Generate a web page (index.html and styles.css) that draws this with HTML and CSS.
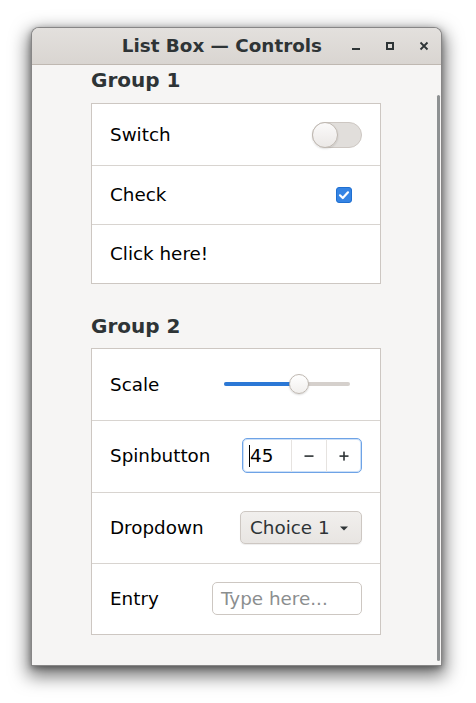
FILE: index.html
```html
<!DOCTYPE html>
<html>
<head>
<meta charset="utf-8">
<link rel="stylesheet" href="styles.css">
</head>
<body>
<div class="window">
  <div class="titlebar">
    <div class="title">List Box — Controls</div>
    <div class="wm-buttons">
      <span class="wm-btn"><svg width="16" height="16" viewBox="0 0 16 16"><rect x="4" y="10" width="8" height="2" fill="#2e3436"/></svg></span>
      <span class="wm-btn"><svg width="16" height="16" viewBox="0 0 16 16"><rect x="5" y="5" width="6" height="6" fill="none" stroke="#2e3436" stroke-width="2"/></svg></span>
      <span class="wm-btn"><svg width="16" height="16" viewBox="0 0 16 16"><path d="M4.5 4.5 L11.5 11.5 M11.5 4.5 L4.5 11.5" stroke="#2e3436" stroke-width="1.8" fill="none"/></svg></span>
    </div>
  </div>
  <div class="content">
    <div class="group-label first">Group 1</div>
    <div class="listbox">
      <div class="row h-switch">
        <span class="label">Switch</span>
        <span class="switch"><span class="knob"></span></span>
      </div>
      <div class="row h-small">
        <span class="label">Check</span>
        <span class="check"><svg width="16" height="16" viewBox="0 0 16 16"><rect x="0.5" y="0.5" width="15" height="15" rx="2.5" fill="#3584e4" stroke="#1f6fd0"/><path d="M4 8.3 L6.8 11 L12 5.3" stroke="#fff" stroke-width="2.2" fill="none" stroke-linecap="round" stroke-linejoin="round"/></svg></span>
      </div>
      <div class="row h-small">
        <span class="label">Click here!</span>
      </div>
    </div>
    <div class="group-label second">Group 2</div>
    <div class="listbox">
      <div class="row h-top">
        <span class="label">Scale</span>
        <span class="scale">
          <span class="trough"><span class="fill" style="width:75px"></span></span>
          <span class="slider" style="left:65px"></span>
        </span>
      </div>
      <div class="row h-mid">
        <span class="label">Spinbutton</span>
        <span class="spin">
          <span class="spin-entry"><span class="caret"></span>45</span>
          <span class="spin-btn"><svg width="16" height="16" viewBox="0 0 16 16"><rect x="3.5" y="7.3" width="9" height="1.6" fill="#2e3436"/></svg></span>
          <span class="spin-btn"><svg width="16" height="16" viewBox="0 0 16 16"><rect x="3.5" y="7.3" width="9" height="1.6" fill="#2e3436"/><rect x="7.2" y="3.6" width="1.6" height="9" fill="#2e3436"/></svg></span>
        </span>
      </div>
      <div class="row h-low">
        <span class="label">Dropdown</span>
        <span class="combo">Choice 1<svg width="16" height="16" viewBox="0 0 16 16"><path d="M4 6.5 H12 L8 10.5 Z" fill="#2e3436"/></svg></span>
      </div>
      <div class="row h-low">
        <span class="label">Entry</span>
        <span class="entry">Type here...</span>
      </div>
    </div>
    <div class="scrollbar"></div>
  </div>
</div>
</body>
</html>
```
FILE: styles.css
```css
* { box-sizing: border-box; }
html, body {
  margin: 0;
  background: #ffffff;
  font-family: "DejaVu Sans", sans-serif;
}
body {
  padding: 27px 0 40px 31px;
}
.window {
  position: relative;
  width: 411px;
  height: 639px;
  background: #f6f5f4;
  border: 1px solid rgba(0, 0, 0, 0.45);
  border-radius: 8px 8px 0 0;
  box-shadow: 0 7px 18px 3px rgba(0, 0, 0, 0.55), 0 2px 6px rgba(0, 0, 0, 0.35);
}
.titlebar {
  height: 37px;
  border-bottom: 1px solid #bfb8b1;
  background: linear-gradient(#e3e0dd, #d9d5d1);
  border-radius: 7px 7px 0 0;
  display: flex;
  align-items: center;
}
.title {
  margin-left: auto;
  margin-right: 17px;
  margin-top: -1px;
  font-weight: bold;
  font-size: 18.33px;
  line-height: 23px;
  color: #2e3436;
}
.wm-buttons { display: flex; }
.wm-btn {
  width: 34px;
  height: 34px;
  display: flex;
  align-items: center;
  justify-content: center;
}
.wm-btn svg { display: block; }
.content {
  padding-left: 59px;
}
.group-label {
  font-weight: bold;
  font-size: 20px;
  line-height: 23px;
  color: #2e3436;
  margin-bottom: 11px;
}
.group-label.first { margin-top: 4px; }
.group-label.second { margin-top: 31px; margin-bottom: 10px; }
.listbox {
  width: 290px;
  background: #ffffff;
  border: 1px solid #cdc7c2;
}
.row {
  display: flex;
  align-items: center;
  justify-content: space-between;
  padding: 0 18px 1px;
  font-size: 18.33px;
  color: #000;
}
.row + .row { border-top: 1px solid #d8d4d0; }
.row.h-switch { height: 61px; padding-bottom: 0; }
.row.h-small { height: 59px; }
.row.h-top { height: 71px; }
.row.h-mid { height: 72px; padding-bottom: 2px; }
.row.h-low { height: 71px; }
.switch {
  position: relative;
  width: 50px;
  height: 26px;
  border-radius: 13px;
  background: #e1dedb;
  border: 1px solid #cdc7c2;
}
.knob {
  position: absolute;
  left: -1px;
  top: -1px;
  width: 26px;
  height: 26px;
  border-radius: 50%;
  background: linear-gradient(#fbfafa, #ebe8e6);
  border: 1px solid #bfb8b1;
  box-shadow: 0 1px 2px rgba(0, 0, 0, 0.12);
}
.check {
  width: 16px;
  height: 16px;
  margin-right: 10px;
}
.check svg { display: block; }
.scale {
  position: relative;
  width: 126px;
  height: 20px;
  margin-right: 12px;
  display: flex;
  align-items: center;
}
.trough {
  width: 126px;
  height: 4px;
  border-radius: 2px;
  background: #d5d0cc;
  overflow: hidden;
}
.fill {
  display: block;
  height: 4px;
  background: #2b78d6;
}
.slider {
  position: absolute;
  top: 0;
  width: 20px;
  height: 20px;
  border-radius: 50%;
  background: linear-gradient(#ffffff, #f1efed);
  border: 1px solid #bfb8b1;
  box-shadow: 0 1px 2px rgba(0, 0, 0, 0.15);
}
.spin {
  display: flex;
  width: 120px;
  height: 35px;
  border: 1px solid #6ea3e6;
  box-shadow: inset 0 0 0 1px rgba(53, 132, 228, 0.25);
  border-radius: 5px;
  background: #fff;
  overflow: hidden;
}
.spin-entry {
  position: relative;
  width: 48px;
  display: flex;
  align-items: center;
  padding-left: 7px;
  font-size: 18.33px;
  color: #000;
}
.caret {
  position: absolute;
  left: 6px;
  top: 6px;
  width: 1px;
  height: 22px;
  background: #000;
}
.spin-btn {
  width: 35px;
  border-left: 1px solid #e6e3e0;
  display: flex;
  align-items: center;
  justify-content: center;
}
.spin-btn svg { display: block; }
.combo {
  display: flex;
  align-items: center;
  width: 122px;
  height: 33px;
  padding-left: 9px;
  border: 1px solid #cdc7c2;
  border-radius: 5px;
  background: linear-gradient(#f1efed, #e8e5e2);
  box-shadow: 0 1px 1px rgba(0, 0, 0, 0.07);
  color: #2e3436;
  font-size: 18.33px;
}
.combo svg {
  display: block;
  margin-left: 6px;
}
.entry {
  display: flex;
  align-items: center;
  width: 150px;
  height: 33px;
  padding-left: 8px;
  border: 1px solid #cdc7c2;
  border-radius: 5px;
  background: #fff;
  color: #8b8e8f;
  font-size: 18.33px;
}
.scrollbar {
  position: absolute;
  left: 405px;
  top: 67px;
  width: 3px;
  height: 566px;
  border-radius: 2px;
  background: #8e9192;
}
```
